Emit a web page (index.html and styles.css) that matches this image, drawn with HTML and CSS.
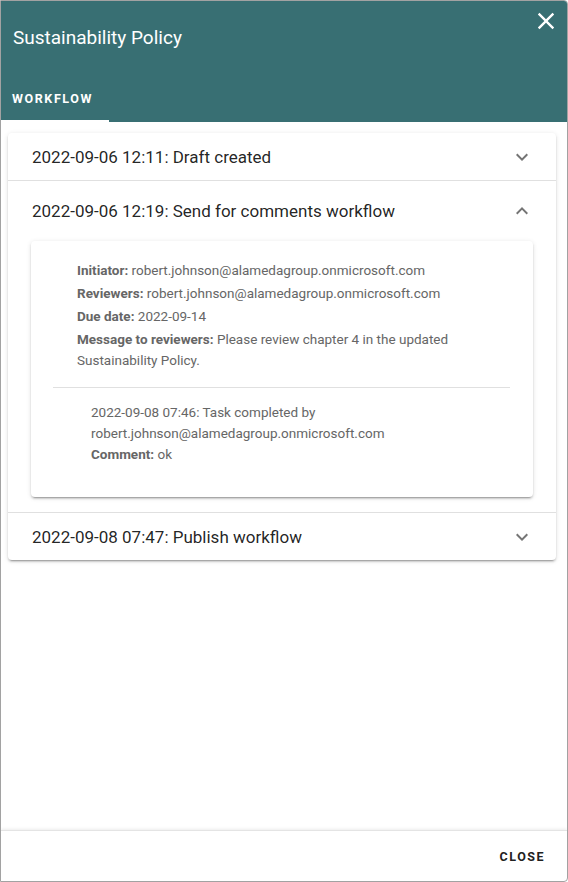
FILE: index.html
```html
<!DOCTYPE html>
<html lang="en">

<head>
    <meta charset="UTF-8">
    <meta name="viewport" content="width=device-width, initial-scale=1.0">
    <title>Sustainability Policy</title>
    <link rel="stylesheet" href="styles.css">
</head>

<body>
    <div class="dialog">
        <div class="dialog-header">
            <h2 class="dialog-title">Sustainability Policy</h2>
            <button class="close-icon" title="Close">
                <svg viewBox="0 0 24 24" width="28" height="28">
                    <path fill="#fff" d="M19 6.41L17.59 5 12 10.59 6.41 5 5 6.41 10.59 12 5 17.59 6.41 19 12 13.41 17.59 19 19 17.59 13.41 12z" />
                </svg>
            </button>
            <div class="tabs">
                <div class="tab active">Workflow</div>
            </div>
        </div>

        <div class="dialog-content">
            <div class="accordion">
                <!-- draft -->
                <div class="panel">
                    <div class="panel-header">
                        <span class="panel-title">2022-09-06 12:11: Draft created</span>
                        <svg class="chevron" viewBox="0 0 24 24" width="24" height="24">
                            <path d="M16.59 8.59L12 13.17 7.41 8.59 6 10l6 6 6-6z" />
                        </svg>
                    </div>
                </div>

                <!-- comments workflow, expanded -->
                <div class="panel expanded">
                    <div class="panel-header">
                        <span class="panel-title">2022-09-06 12:19: Send for comments workflow</span>
                        <svg class="chevron" viewBox="0 0 24 24" width="24" height="24">
                            <path d="M12 8l-6 6 1.41 1.41L12 10.83l4.59 4.58L18 14z" />
                        </svg>
                    </div>
                    <div class="panel-body">
                        <div class="step-card">
                            <div class="step-info">
                                <p><b>Initiator:</b> robert.johnson@alamedagroup.onmicrosoft.com</p>
                                <p><b>Reviewers:</b> robert.johnson@alamedagroup.onmicrosoft.com</p>
                                <p><b>Due date:</b> 2022-09-14</p>
                                <p><b>Message to reviewers:</b> Please review chapter 4 in the updated Sustainability Policy.</p>
                            </div>
                            <hr class="divider">
                            <div class="task">
                                <p>2022-09-08 07:46: Task completed by robert.johnson@alamedagroup.onmicrosoft.com</p>
                                <p><b>Comment:</b> ok</p>
                            </div>
                        </div>
                    </div>
                </div>

                <!-- publish -->
                <div class="panel">
                    <div class="panel-header">
                        <span class="panel-title">2022-09-08 07:47: Publish workflow</span>
                        <svg class="chevron" viewBox="0 0 24 24" width="24" height="24">
                            <path d="M16.59 8.59L12 13.17 7.41 8.59 6 10l6 6 6-6z" />
                        </svg>
                    </div>
                </div>
            </div>
        </div>

        <div class="dialog-actions">
            <button class="text-button">Close</button>
        </div>
    </div>
</body>

</html>
```

FILE: styles.css
```css
html,
body {
    margin: 0;
    height: 100%;
}

body {
    font-family: Roboto, "Liberation Sans", sans-serif;
    background: #fff;
}

.dialog {
    position: relative;
    display: flex;
    flex-direction: column;
    height: 100%;
    box-sizing: border-box;
    border: 1px solid #a2a2a2;
    border-radius: 0 4px 4px 0;
    overflow: hidden;
}

.dialog-header {
    background: #386f73;
    color: #fff;
}

.dialog-title {
    margin: 0;
    height: 73px;
    padding: 0 12px;
    display: flex;
    align-items: center;
    font-size: 19px;
    font-weight: 400;
}

.close-icon {
    position: absolute;
    top: 6px;
    right: 7px;
    padding: 0;
    border: 0;
    background: none;
    cursor: pointer;
}

.close-icon svg {
    display: block;
}

.tabs {
    display: flex;
}

.tab {
    width: 108px;
    height: 48px;
    box-sizing: border-box;
    padding-left: 11px;
    display: flex;
    align-items: center;
    font-size: 12.5px;
    font-weight: 700;
    letter-spacing: 1.6px;
    text-transform: uppercase;
}

.tab.active {
    border-bottom: 2px solid #fff;
    padding-top: 2px;
}

.dialog-content {
    flex: 1;
    padding: 11px 11px 0 7px;
}

.accordion {
    background: #fff;
    border-radius: 4px;
    box-shadow: 0 3px 1px -2px rgba(0, 0, 0, .2), 0 2px 2px 0 rgba(0, 0, 0, .14), 0 1px 5px 0 rgba(0, 0, 0, .12);
}

.panel + .panel {
    border-top: 1px solid #e0e0e0;
}

.panel-header {
    height: 47px;
    padding: 0 22px 0 24px;
    display: flex;
    align-items: center;
    justify-content: space-between;
    cursor: pointer;
}

.panel.expanded .panel-header {
    height: 60px;
}

.panel-title {
    font-size: 17px;
    color: rgba(0, 0, 0, .87);
}

.chevron {
    fill: rgba(0, 0, 0, .54);
}

.panel-body {
    padding: 0 23px 15px 23px;
}

.step-card {
    background: #fff;
    border-radius: 4px;
    padding: 19px 23px 32px 22px;
    box-shadow: 0 3px 1px -2px rgba(0, 0, 0, .2), 0 2px 2px 0 rgba(0, 0, 0, .14), 0 1px 5px 0 rgba(0, 0, 0, .12);
    font-size: 13.5px;
    color: #666;
}

.step-card p {
    margin: 0 0 2px;
    line-height: 21px;
}

.step-card b {
    font-weight: 700;
}

.step-info {
    padding: 0 24px;
}

.divider {
    margin: 16px 0 14px;
    border: 0;
    border-top: 1px solid #e0e0e0;
}

.task {
    padding: 0 38px;
}

.task p {
    margin: 0;
}

.dialog-actions {
    height: 50px;
    display: flex;
    align-items: center;
    justify-content: flex-end;
    padding-right: 14px;
    border-top: 1px solid #e4e4e4;
    box-shadow: 0 -1px 3px rgba(0, 0, 0, .08);
}

.text-button {
    border: 0;
    background: none;
    padding: 8px;
    font-family: inherit;
    font-size: 12.5px;
    font-weight: 700;
    letter-spacing: 1.5px;
    text-transform: uppercase;
    color: #212121;
    cursor: pointer;
}
```
